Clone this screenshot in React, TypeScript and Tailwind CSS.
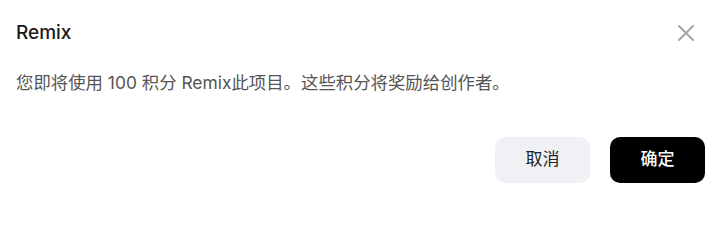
export default function App() {
  return (
    <div className="w-[719px] h-[200px] bg-white font-['Inter','Noto_Sans_CJK_SC',sans-serif]">
      <div className="flex items-center justify-between pl-4 pr-[25px] pt-[21px]">
        <h2 className="text-[19px] leading-6 font-medium text-[#1a1a1a]">Remix</h2>
        <button className="text-[#a6a6a6]">
          <svg width="16" height="16" viewBox="0 0 16 16" fill="none" stroke="currentColor" strokeWidth={2} strokeLinecap="round">
            <path d="M1 1l14 14M15 1L1 15" />
          </svg>
        </button>
      </div>
      <p className="mt-[26px] pl-4 text-[17.4px] leading-6 text-[#555]">
        您即将使用 100 积分 Remix此项目。这些积分将奖励给创作者。
      </p>
      <div className="mt-[42px] flex justify-end gap-5 pr-[14px]">
        <button className="w-[95px] h-[46px] rounded-[10px] bg-[#f0f1f5] text-[17px] font-normal text-[#222]">
          取消
        </button>
        <button className="w-[95px] h-[46px] rounded-[10px] bg-black text-[17px] font-medium text-white">
          确定
        </button>
      </div>
    </div>
  );
}
